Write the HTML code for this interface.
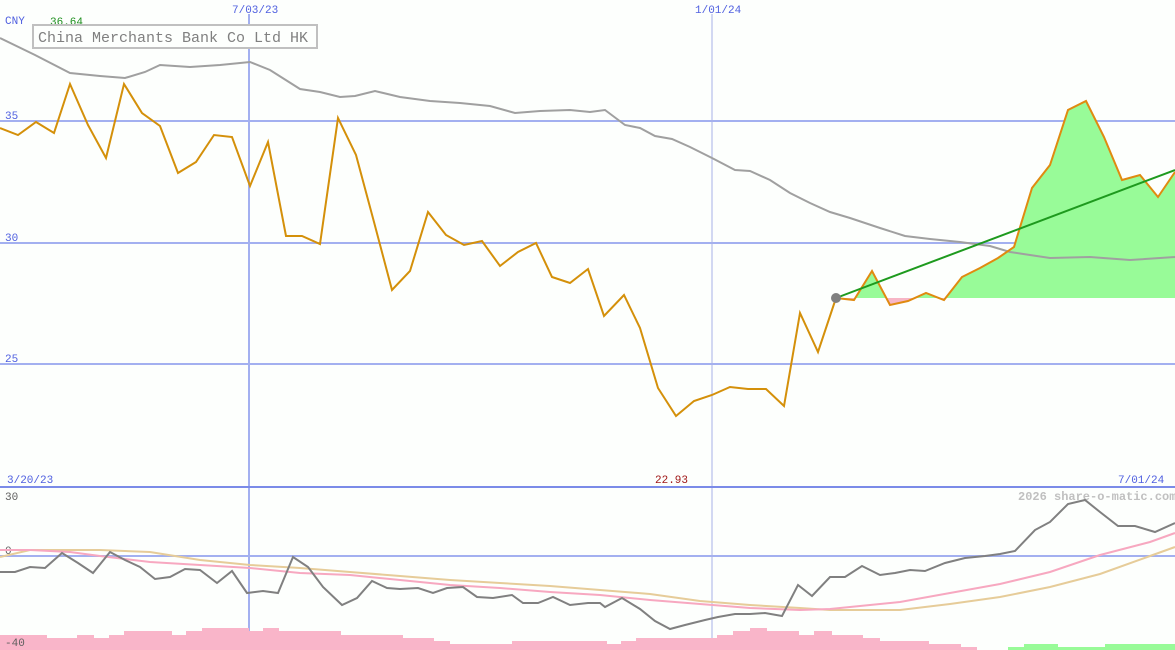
<!DOCTYPE html>
<html><head><meta charset="utf-8"><style>
html,body{margin:0;padding:0;background:#fdfffd;}
svg{display:block;font-family:"Liberation Mono",monospace;}
</style></head><body>
<svg width="1175" height="650" viewBox="0 0 1175 650" xmlns="http://www.w3.org/2000/svg">
<rect width="1175" height="650" fill="#fdfffd"/>
<defs>
<clipPath id="above"><rect x="0" y="0" width="1175" height="298"/></clipPath>
<clipPath id="below"><rect x="0" y="298" width="1175" height="60"/></clipPath>
</defs>
<g stroke="#a3b0f0" stroke-width="2">
<line x1="0" y1="121" x2="1175" y2="121"/>
<line x1="0" y1="243" x2="1175" y2="243"/>
<line x1="0" y1="364" x2="1175" y2="364"/>
<line x1="0" y1="556" x2="1175" y2="556"/>
<line x1="249" y1="14" x2="249" y2="650"/>
</g>
<line x1="712" y1="14" x2="712" y2="650" stroke="#a8b2e8" stroke-width="1"/>
<line x1="0" y1="487" x2="1175" y2="487" stroke="#7b8be8" stroke-width="2"/>
<polygon clip-path="url(#above)" fill="#98fb98" points="836,298 854,300 872,271 890,305 908,301 926,293 944,300 962,277 980,268 998,258 1014,247 1032,188 1050,165 1068,110 1086,101 1104,137 1122,180 1140,175 1158,197 1175,172 1175,298"/>
<polygon clip-path="url(#below)" fill="#f7b6c6" points="836,298 854,300 872,271 890,305 908,301 926,293 944,300 962,277 980,268 998,258 1014,247 1032,188 1050,165 1068,110 1086,101 1104,137 1122,180 1140,175 1158,197 1175,172 1175,298"/>
<polyline fill="none" stroke="#a0a0a0" stroke-width="2" points="0,38 35,55 70,73 100,76 125,78 145,72 160,65 190,67 220,65 250,62 270,70 300,89 320,92 340,97 355,96 375,91 400,97 430,101 460,103 490,106 515,113 540,111 570,110 590,112 605,110 625,125 640,128 655,136 672,139 690,147 712,158 735,170 750,171 770,180 790,193 810,203 830,212 850,218 880,228 905,236 930,239 960,242 990,246 1010,252 1050,258 1090,257 1130,260 1175,257"/>
<polyline fill="none" stroke="#d4900a" stroke-width="2" points="0,128 18,135 36,122 54,133 70,84 88,125 106,158 124,84 142,113 160,126 178,173 196,162 214,135 232,137 250,186 268,142 286,236 302,236 320,244 338,118 356,155 374,222 392,290 410,271 428,212 446,235 464,245 482,241 500,266 518,252 536,243 552,277 570,283 588,269 604,316 624,295 640,328 658,388 676,416 694,401 712,395 730,387 748,389 766,389 784,406 800,313 818,352 836,298"/>
<polyline fill="none" stroke="#e08a10" stroke-width="2" points="836,298 854,300 872,271 890,305 908,301 926,293 944,300 962,277 980,268 998,258 1014,247 1032,188 1050,165 1068,110 1086,101 1104,137 1122,180 1140,175 1158,197 1175,172"/>
<line x1="836" y1="298" x2="1175" y2="170" stroke="#1e9a1e" stroke-width="2"/>
<circle cx="836" cy="298" r="5" fill="#808080"/>
<text x="5" y="24" font-size="11" fill="#5060e0">CNY</text>
<text x="50" y="25" font-size="11" fill="#209020">36.64</text>
<text x="232" y="13" font-size="11" fill="#5060e0">7/03/23</text>
<text x="695" y="13" font-size="11" fill="#5060e0">1/01/24</text>
<text x="5" y="119" font-size="11" fill="#5060e0">35</text>
<text x="5" y="241" font-size="11" fill="#5060e0">30</text>
<text x="5" y="362" font-size="11" fill="#5060e0">25</text>
<text x="7" y="483" font-size="11" fill="#5060e0">3/20/23</text>
<text x="655" y="483" font-size="11" fill="#a01818">22.93</text>
<text x="1118" y="483" font-size="11" fill="#5060e0">7/01/24</text>
<rect x="33" y="25" width="284" height="23" fill="#fdfffd" stroke="#c0c0c0" stroke-width="2"/>
<text x="38" y="42" font-size="15" fill="#808080">China Merchants Bank Co Ltd HK</text>
<text x="1018" y="500" font-size="12" fill="#c0c0c0" font-weight="bold">2026 share-o-matic.com</text>
<text x="5" y="500" font-size="11" fill="#606060">30</text>
<text x="5" y="554" font-size="11" fill="#606060">0</text>
<path fill="#f9b5c9" d="M0,635H47V638H77V635H94V638H109V635H124V631H172V635H186V631H202V628H249V631H263V628H279V631H341V635H403V638H434V641H450V644H512V641H607V644H621V641H636V638H717V635H733V631H750V628H767V631H799V635H814V631H832V635H863V638H880V641H929V644H961V647H977V650H0Z"/>
<path fill="#98fb98" d="M1008,647H1024V644H1058V647H1105V644H1175V650H1008Z"/>
<text x="5" y="646" font-size="11" fill="#606060">-40</text>
<polyline fill="none" stroke="#e6cc99" stroke-width="2" points="0,557 30,550 100,550 150,552 200,560 250,565 300,568 350,572 400,576 450,580 500,583 550,586 600,590 650,594 700,601 750,605 800,608 830,610 870,610 900,610 950,604 1000,597 1050,587 1100,574 1150,556 1175,547"/>
<polyline fill="none" stroke="#f7a8c0" stroke-width="2" points="0,550 30,550 70,552 100,556 150,562 200,565 250,568 300,573 350,575 400,580 450,585 500,588 550,592 600,595 650,600 700,604 750,608 800,610 830,609 870,605 900,602 950,593 1000,584 1050,572 1100,555 1150,542 1175,533"/>
<polyline fill="none" stroke="#808080" stroke-width="2" points="0,572 15,572 30,567 45,568 62,553 78,563 93,573 110,552 125,560 140,567 155,579 170,577 185,569 200,570 217,583 232,571 247,593 263,591 278,593 293,557 308,567 323,587 342,605 357,598 372,581 387,588 400,589 418,588 433,593 447,588 463,587 477,597 493,598 512,595 523,603 538,603 553,597 570,605 588,603 600,603 605,607 622,598 640,609 655,621 670,629 685,625 705,620 718,617 735,614 750,614 765,613 782,616 798,585 812,596 830,577 845,577 862,566 880,575 895,573 910,570 925,571 945,563 965,558 985,556 1000,554 1015,551 1035,530 1050,522 1068,504 1085,500 1100,512 1118,526 1135,526 1155,532 1175,523"/>
</svg>
</body></html>
